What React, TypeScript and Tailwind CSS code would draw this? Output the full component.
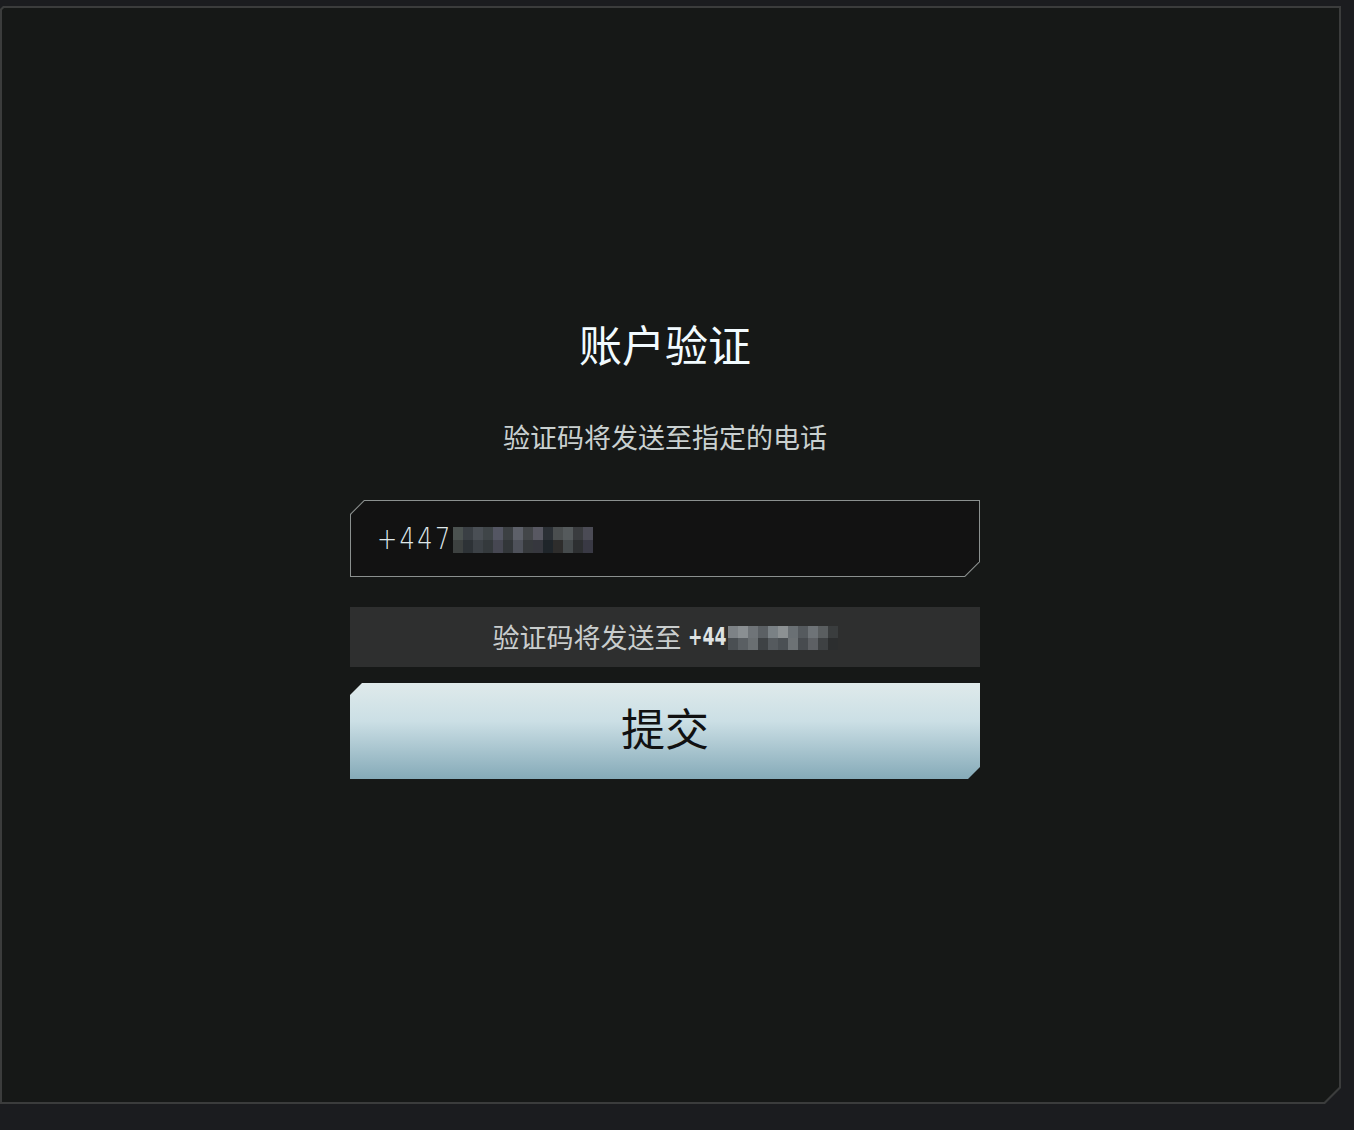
const MOSAIC_A = ['#4b5250', '#3a3f44', '#4a4f55', '#3f4548', '#545663', '#3c4043', '#5d6069', '#434649', '#585862', '#2b3035', '#4a4e4f', '#555a5c', '#3a3c3f', '#4b4b55'];
const MOSAIC_B = ['#3d4140', '#2d3236', '#3c4146', '#34393c', '#464752', '#323639', '#4e515a', '#36393c', '#36373e', '#1f252a', '#2e2d2c', '#454a4c', '#2d2f31', '#393944'];
const MOSAIC_C = ['#7d8286', '#8a8f92', '#6f7478', '#5b6064', '#7a8185', '#8c9193', '#6a7074', '#555a5e', '#6e7377', '#5a5e60', '#3a3d3e'];
const MOSAIC_D = ['#4a4f53', '#5a5f63', '#6a6f72', '#3e4245', '#555a5e', '#4b5054', '#6d7275', '#474b4f', '#5d6064', '#3e4143', '#2c2e2f'];

function Mosaic({ top, bottom, w, h }: { top: string[]; bottom: string[]; w: number; h: number }) {
  return (
    <div className="flex flex-col">
      <div className="flex">
        {top.map((c, i) => (
          <div key={i} style={{ background: c, width: w, height: h }} />
        ))}
      </div>
      <div className="flex">
        {bottom.map((c, i) => (
          <div key={i} style={{ background: c, width: w, height: h }} />
        ))}
      </div>
    </div>
  );
}

export default function App() {
  return (
    <div className="h-[1130px] w-[1354px] overflow-hidden bg-[#1b1c1f] pt-[6px]">
      {/* panel border */}
      <div className="h-[1098px] w-[1341px] bg-[#3b3c3c] p-[2px] [clip-path:polygon(3px_0,100%_0,100%_calc(100%-16px),calc(100%-16px)_100%,0_100%,0_3px)]">
        <div className="h-full w-full bg-[#161817] [clip-path:polygon(2px_0,100%_0,100%_calc(100%-15px),calc(100%-15px)_100%,0_100%,0_2px)]">
          <div className="ml-[348px] w-[630px] pt-[307px] font-['Noto_Sans_CJK_SC',sans-serif]">
            <h1 className="text-center text-[43px] leading-[56px] text-[#f2fbff]">账户验证</h1>

            <p className="mt-[47px] text-center text-[27px] leading-[38px] text-[#c9d0d0]">验证码将发送至指定的电话</p>

            {/* phone input */}
            <div className="mt-[44px] h-[77px] bg-[#8b908f] p-px [clip-path:polygon(14px_0,100%_0,100%_calc(100%-15px),calc(100%-15px)_100%,0_100%,0_14px)]">
              <div className="flex h-full items-center bg-[#121212] pl-[26px] [clip-path:polygon(13.5px_0,100%_0,100%_calc(100%-14.5px),calc(100%-14.5px)_100%,0_100%,0_13.5px)]">
                <span className="inline-block origin-left scale-x-[0.78] font-['DejaVu_Sans',sans-serif] text-[31px] font-light tracking-[3px] text-[#dfe7ea]">+4470</span>
                <div className="relative z-10 -ml-[44px] mt-[2px]">
                  <Mosaic top={MOSAIC_A} bottom={MOSAIC_B} w={10} h={13} />
                </div>
              </div>
            </div>

            {/* notice */}
            <div className="mt-[30px] flex h-[60px] items-center justify-center bg-[#2e2f2f] text-[27px] text-[#c9cdcd]">
              <span>验证码将发送至</span>
              <span className="ml-[6px] inline-block w-[36px] origin-left scale-x-[0.72] font-['DejaVu_Sans',sans-serif] text-[24px] font-bold text-[#dfe3e3]">+44</span>
              <div className="ml-[4px] mt-[2px]">
                <Mosaic top={MOSAIC_C} bottom={MOSAIC_D} w={10} h={12} />
              </div>
            </div>

            {/* submit */}
            <button className="mt-[16px] flex h-[96px] w-[630px] items-center justify-center bg-gradient-to-b from-[#dfeaeb] via-[#cbdfe5] via-40% to-[#85aab8] pb-[8px] text-[44px] text-[#111] [clip-path:polygon(12px_0,100%_0,100%_calc(100%-12px),calc(100%-12px)_100%,0_100%,0_12px)]">
              提交
            </button>
          </div>
        </div>
      </div>
    </div>
  );
}
